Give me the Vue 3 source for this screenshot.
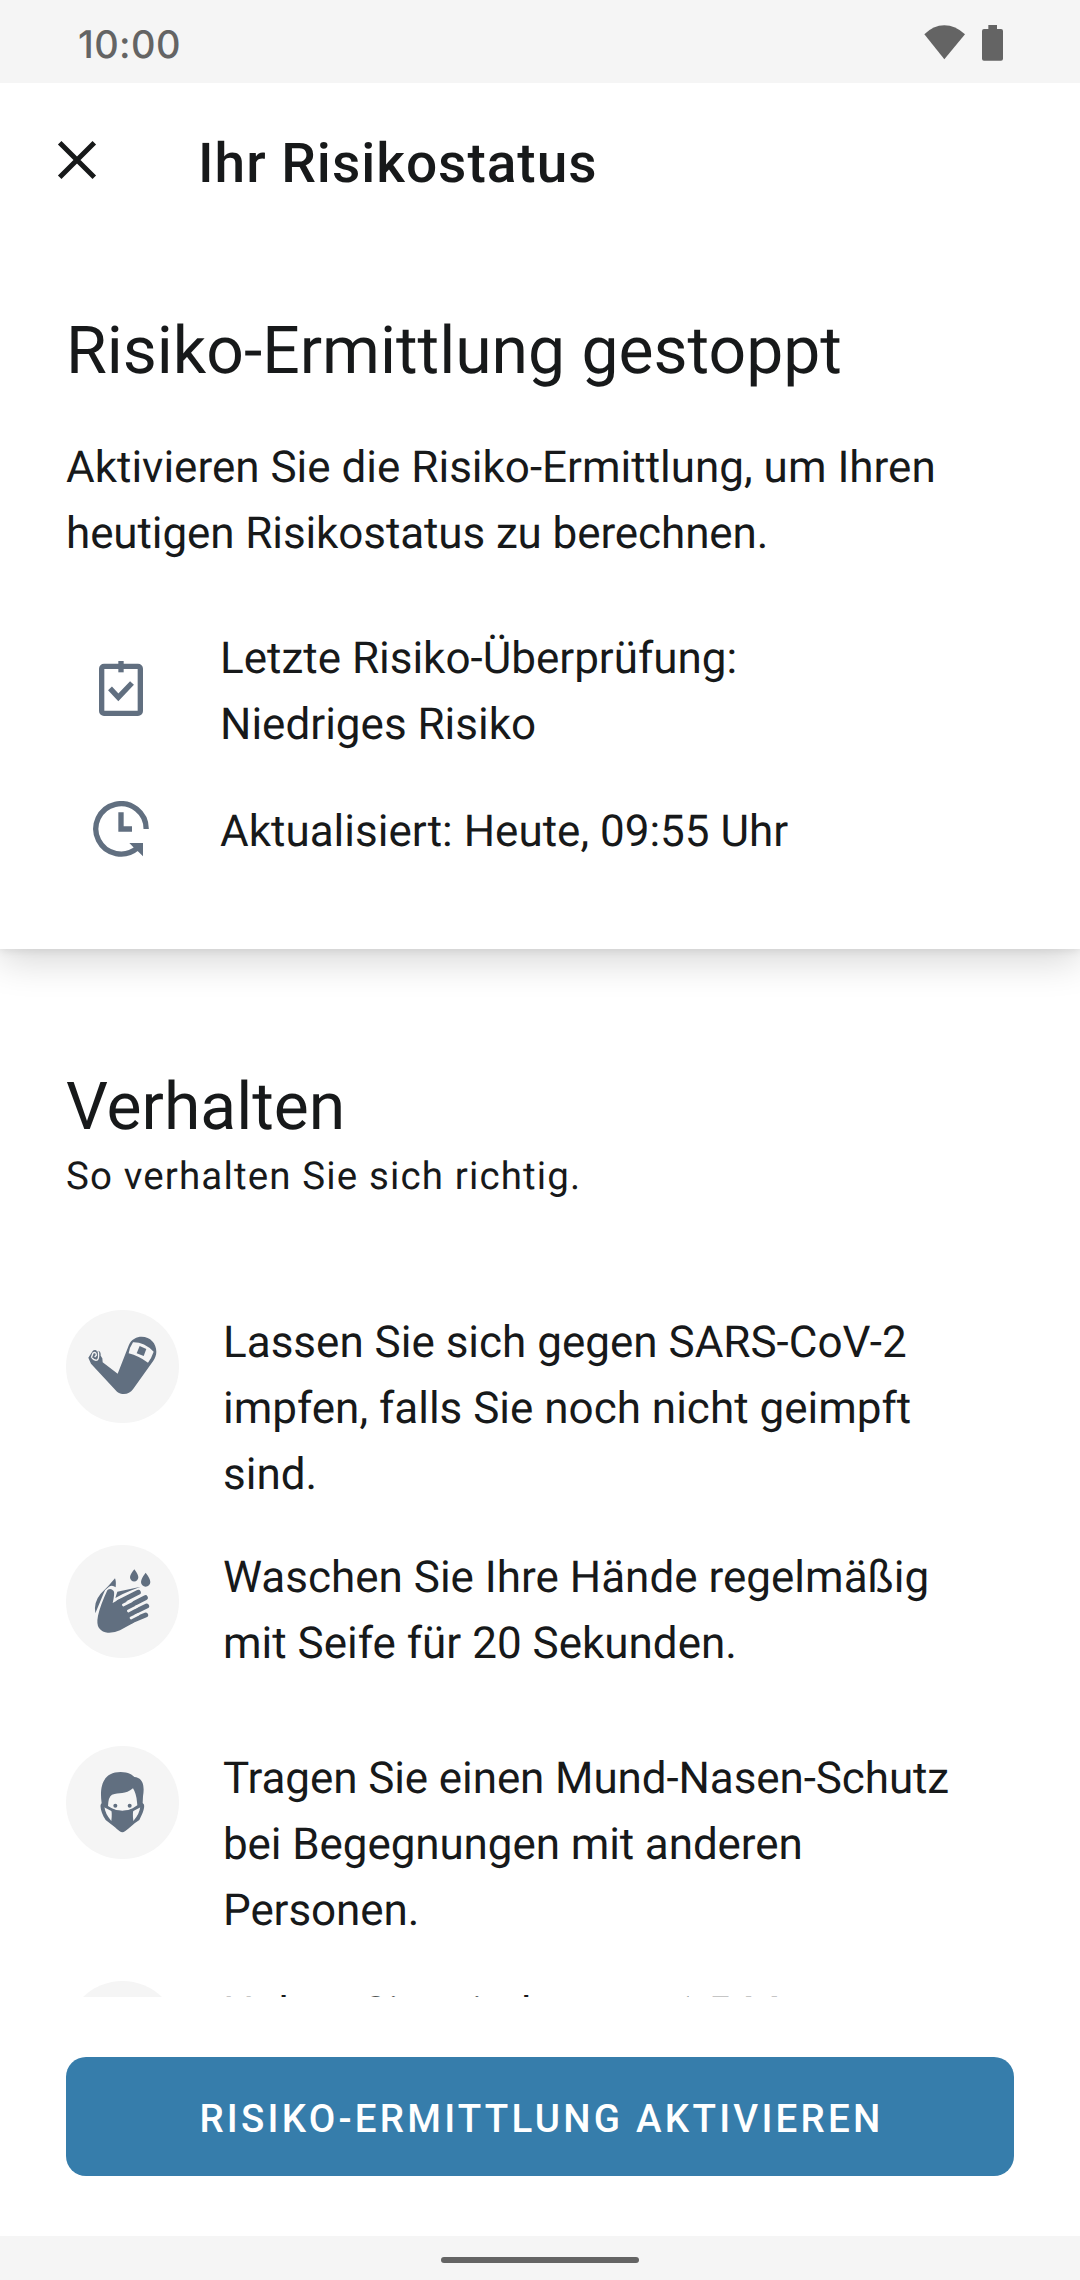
<script setup>
const rules = [
  { icon: 'arm', lines: ['Lassen Sie sich gegen SARS-CoV-2', 'impfen, falls Sie noch nicht geimpft', 'sind.'] },
  { icon: 'hands', lines: ['Waschen Sie Ihre Hände regelmäßig', 'mit Seife für 20 Sekunden.'] },
  { icon: 'mask', lines: ['Tragen Sie einen Mund-Nasen-Schutz', 'bei Begegnungen mit anderen', 'Personen.'] },
  { icon: 'distance', lines: ['Halten Sie mindestens 1,5 Meter'] },
]
</script>

<template>
  <div class="screen">
    <div class="status-bar">
      <span class="time">10:00</span>
      <svg class="status-icons" width="80" height="37" viewBox="132 75 240 111">
        <path d="M133 103Q160 76 193 76T255 103L193 178Z" />
        <path d="M325 75h26v12h12q6 0 6 6v83q0 6-6 6h-51q-6 0-6-6V93q0-6 6-6h13z" />
      </svg>
    </div>

    <header class="toolbar">
      <svg class="close" width="40" height="40" viewBox="0 0 40 40">
        <path d="M2.7 2.7L37.3 37.3M37.3 2.7L2.7 37.3" />
      </svg>
      <h1>Ihr Risikostatus</h1>
    </header>

    <main class="content">
      <section class="card">
        <h2>Risiko-Ermittlung gestoppt</h2>
        <p class="body intro">Aktivieren Sie die Risiko-Ermittlung, um Ihren<br><span class="tight">heutigen Risikostatus zu berechnen.</span></p>
        <div class="fact">
          <svg width="44" height="55" viewBox="117 94 132 165">
            <rect x="125" y="110" width="116" height="141" rx="7" class="line" />
            <path d="M175 94h16v34h-16z" />
            <path d="M150 176L175 203L216 160" class="line" />
          </svg>
          <p class="body">Letzte Risiko-Überprüfung:<br>Niedriges Risiko</p>
        </div>
        <div class="fact">
          <svg width="56" height="56" viewBox="99 510 168 168">
            <path d="M258.500 594A75.500 75.500 0 1 0 232 651" class="line" />
            <path d="M208 636H249V676L236 663L226 655Z" />
            <path d="M175 544h16v42h25v16h-41z" />
          </svg>
          <p class="body">Aktualisiert: Heute, 09:55 Uhr</p>
        </div>
      </section>

      <section class="behavior">
        <h2>Verhalten</h2>
        <p class="subtitle">So verhalten Sie sich richtig.</p>
        <ul>
          <li v-for="rule in rules" :key="rule.icon">
            <span class="badge">
              <svg v-if="rule.icon === 'arm'" viewBox="18 30 339 339">
                <path d="M128 187L173 221L207 134C215 117 230 110 245 110C271 110 289 130 289 155C289 165 285 174 280 182L219 268C208 285 184 286 171 275L93 191L85 173L98 153Q102 149 109 151L111 155L116 152Q123 155 122 167L127 175Z" />
                <path class="light" d="M219 127Q252 126 281 155Q275 173 264 188Q236 168 206 160Q209 142 219 127Z" />
                <path d="M239 138L259 147L251 168L230 160Z" />
                <path class="spiral" d="M94 173L99 159Q109 154 109 166L104 171M96 174Q104 183 112 180Q118 174 115 154" />
              </svg>
              <svg v-else-if="rule.icon === 'hands'" viewBox="18 30 339 339">
                <path d="M223 103Q235 119 235 127A12.500 12.500 0 0 1 210 127Q210 119 223 103ZM257 113Q271 131 271 141A14 14 0 0 1 243 141Q243 131 257 113Z" />
                <path d="M165 130Q169 139 167 157Q157 149 147 155Q135 162 131 175L106 235Q100 202 122 176Q145 155 165 130ZM172 170L242 155L211 167Q187 176 166 189Z" />
                <path d="M142 166Q151 157 161 168Q165 174 158 204L181 191L225 211L221 263L180 286Q164 294 143 293Q128 293 117 279Q109 268 114 242Q121 211 142 166Z" />
                <path class="finger" d="M176 202L235 172M186 224L256 188M188 248L260 213M196 265L257 240" />
                <path class="gap" d="M190 210L214 198M205 228L230 215M213 249L235 238" />
              </svg>
              <svg v-else-if="rule.icon === 'mask'" viewBox="18 18 339 339">
                <path d="M125 190C118 142 127 96 182 96C205 96 218 105 223 111C247 113 255 134 249 169L248 190C258 194 250 218 238 240Q226 247 210 262Q192 278 187 277Q180 277 165 262L137 240C124 219 117 196 125 190Z" />
                <path class="face" d="M144 198Q145 170 156 164C177 157 196 165 219 145Q229 161 231 186L232 196L218 205Q186 222 154 204Z" />
                <circle cx="166" cy="197" r="6" /><circle cx="209" cy="197" r="6" />
                <path class="face" d="M133 199L153 208Q157 221 154 243Q135 222 133 199ZM241 199L221 208Q217 221 220 243Q239 222 241 199Z" />
                <path d="M127 189L156 208Q187 217 218 208L247 189L249 198L220 213Q187 222 154 213L125 198Z" />
              </svg>
            </span>
            <p class="body" :class="{ tight: rule.icon === 'mask' }"><template v-for="(line, i) in rule.lines" :key="line"><br v-if="i">{{ line }}</template></p>
          </li>
        </ul>
      </section>
    </main>

    <footer class="actions">
      <button type="button">RISIKO-ERMITTLUNG AKTIVIEREN</button>
    </footer>
    <div class="nav-bar"><span class="handle"></span></div>
  </div>
</template>

<style>
body { margin: 0; background: #fff; }
</style>

<style scoped>
.screen {
  width: 1080px;
  height: 2280px;
  display: flex;
  flex-direction: column;
  overflow: hidden;
  background: #fff;
  color: #17191a;
  font-family: Roboto, sans-serif;
  text-rendering: geometricPrecision;
}
h1, h2, p, ul { margin: 0; padding: 0; font-weight: 400; }
svg { display: block; flex: none; }
.status-bar {
  box-sizing: border-box;
  height: 83px;
  flex: none;
  display: flex;
  justify-content: space-between;
  padding: 22px 76px 0 78px;
  background: #f5f5f5;
}
.time {
  font: 500 38px/46px Inter, sans-serif;
  letter-spacing: 0.4px;
  color: #646464;
}
.status-icons { fill: #646464; margin-top: 3px; }
.toolbar {
  height: 154px;
  flex: none;
  display: flex;
  align-items: center;
  padding-left: 57px;
}
.close { fill: none; stroke: #17191a; stroke-width: 5; }
.toolbar h1 {
  margin: 7px 0 0 101px;
  font-size: 55px;
  line-height: 64px;
  font-weight: 500;
  letter-spacing: 1px;
}
.content {
  height: 1760px;
  flex: none;
  overflow: hidden;
}
.card {
  box-sizing: border-box;
  height: 712px;
  padding: 76px 66px 0;
  background: #fff;
  box-shadow: 0 12px 36px rgba(0, 0, 0, 0.16), 0 2px 8px rgba(0, 0, 0, 0.08);
}
h2 { font-size: 66px; line-height: 78px; }
.body { font-size: 44px; line-height: 66px; white-space: nowrap; }
.tight { letter-spacing: -0.1px; }
.intro { margin: 43px 0 59px; }
.fact {
  display: grid;
  grid-template-columns: 110px auto;
  column-gap: 44px;
  align-items: center;
}
.fact svg { justify-self: center; fill: #616f80; margin-bottom: 5px; }
.fact + .fact { margin-top: 41px; }
.line { fill: none; stroke: #616f80; stroke-width: 16; }
.behavior { padding: 120px 66px 0; }
.subtitle {
  margin-top: 7px;
  font-size: 38.5px;
  line-height: 46px;
  letter-spacing: 1.13px;
}
ul { margin-top: 110px; list-style: none; }
li {
  display: flex;
  align-items: flex-start;
  gap: 44px;
  min-height: 163px;
  margin-bottom: 38px;
}
li .body { margin-top: -1px; }
.badge {
  width: 113px;
  height: 113px;
  flex: none;
  border-radius: 50%;
  background: #f5f5f5;
}
.badge svg { width: 113px; height: 113px; fill: #616f80; }
.badge .light, .badge .face { fill: #f5f5f5; }
.spiral { fill: none; stroke: #f5f5f5; stroke-width: 4; }
.finger { fill: none; stroke: #616f80; stroke-width: 15; stroke-linecap: round; }
.gap { fill: none; stroke: #f5f5f5; stroke-width: 8; stroke-linecap: round; }
.actions { height: 239px; flex: none; padding: 60px 66px 0; box-sizing: border-box; }
button {
  display: block;
  width: 948px;
  height: 119px;
  padding: 4px 0 0 3px;
  border: 0;
  border-radius: 20px;
  background: #367dab;
  color: #fff;
  font: 500 38.5px/46px Roboto, sans-serif;
  letter-spacing: 3.25px;
}
.nav-bar {
  height: 44px;
  flex: none;
  display: flex;
  align-items: center;
  justify-content: center;
  background: #f5f5f5;
}
.handle { width: 198px; height: 6px; margin-top: 4px; border-radius: 3px; background: #646464; }
</style>
